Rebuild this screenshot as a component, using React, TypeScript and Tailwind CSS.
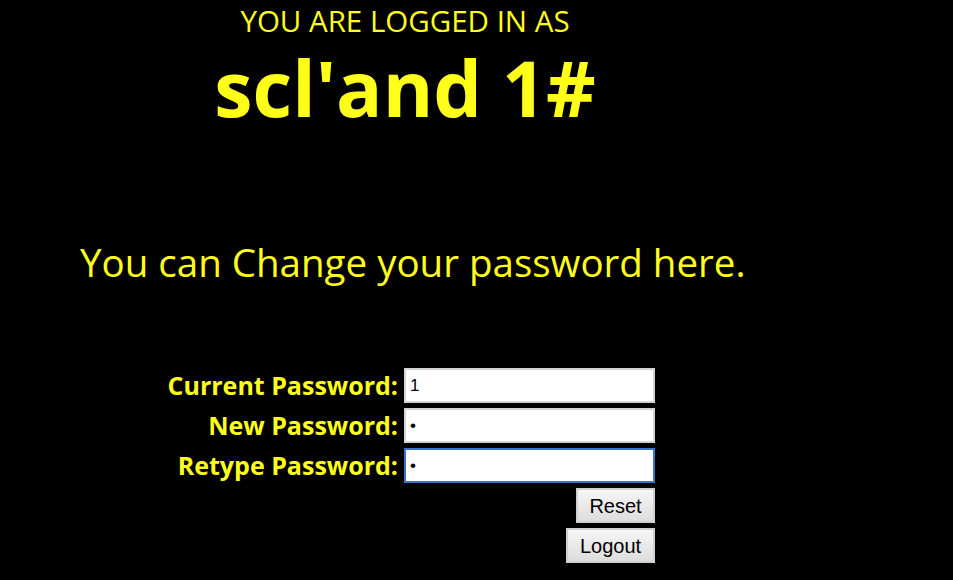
import React from "react";

const Row = ({ label, type, value, focused }: { label: string; type: string; value: string; focused?: boolean }) => (
    <div className="flex flex-row items-center h-[35px]">
        <label className="w-[398px] text-right font-bold text-[25px] leading-none">{label}</label>
        <input
            className={
                "ml-[6px] w-[251px] h-[35px] bg-white text-black px-[4px] text-[17px] font-['Liberation_Sans',sans-serif] outline-none " +
                (focused ? "border-2 border-[#3b73c8]" : "border-2 border-[#d4d4d4]")
            }
            type={type}
            defaultValue={value}
        />
    </div>
);

export default function App() {
    return (
        <div className="w-full h-[580px] overflow-hidden bg-black text-[#ffff1a] font-['Open_Sans',sans-serif]">
            <div className="w-[810px] text-center pt-[4px]">
                <div className="text-[29.5px] leading-[34px]">YOU ARE LOGGED IN AS</div>
                <div className="text-[77px] font-bold leading-[100px]">scl'and 1#</div>
            </div>

            <p className="pl-[80px] mt-[99px] text-[38.5px] leading-[50px]">You can Change your password here.</p>

            <div className="mt-[81px] flex flex-col gap-[5px]">
                <Row label="Current Password:" type="text" value="1" />
                <Row label="New Password:" type="password" value="1" />
                <Row label="Retype Password:" type="password" value="1" focused />
                <div className="w-[655px] flex flex-col items-end gap-[5px]">
                    <button className="h-[35px] w-[79px] bg-gradient-to-b from-[#f6f6f6] to-[#dddddd] border-2 border-[#d0d0d0] text-black text-[20px] font-['Liberation_Sans',sans-serif]">Reset</button>
                    <button className="h-[35px] w-[89px] bg-gradient-to-b from-[#f6f6f6] to-[#dddddd] border-2 border-[#d0d0d0] text-black text-[20px] font-['Liberation_Sans',sans-serif]">Logout</button>
                </div>
            </div>
        </div>
    );
}
